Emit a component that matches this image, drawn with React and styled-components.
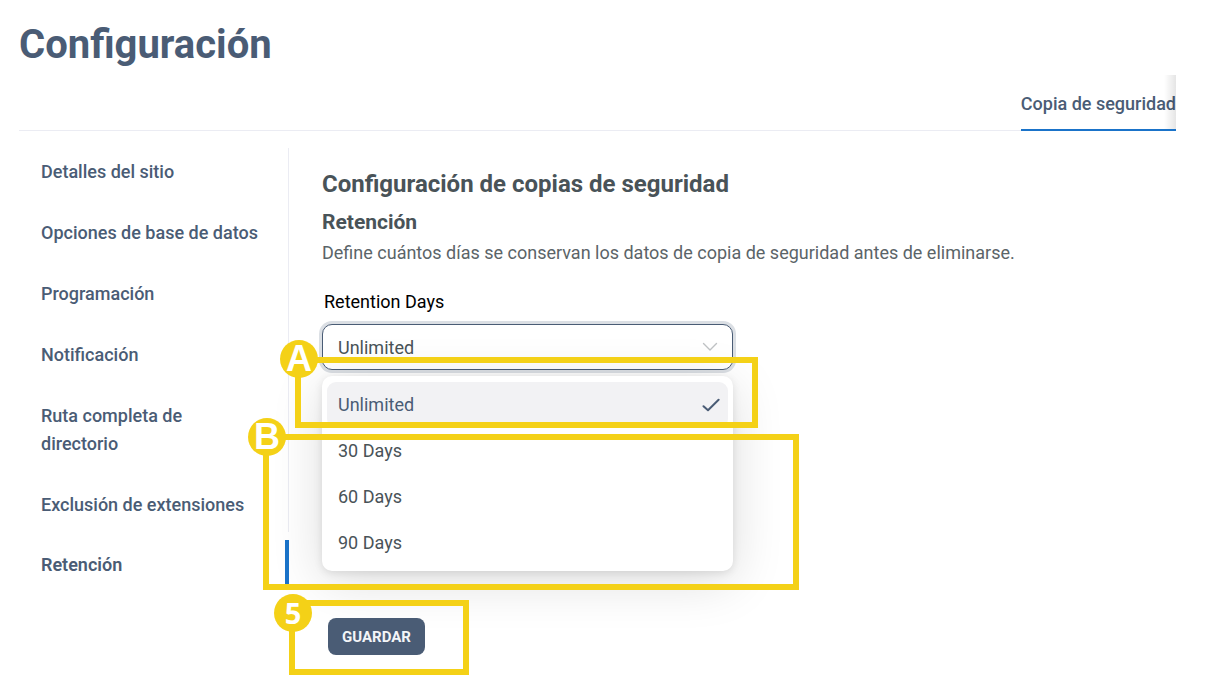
import React from "react";
import styled, { createGlobalStyle } from "styled-components";

const slate = "#4a5c75";
const ink = "#495358";
const line = "#ebecf3";
const blue = "#1a73c9";
const yellow = "#f4d117";

const GlobalStyle = createGlobalStyle`
  *, *::before, *::after { box-sizing: border-box; }
  body {
    margin: 0;
    background: #fff;
    color: ${ink};
    font-family: Roboto, "Liberation Sans", sans-serif;
    font-size: 18px;
    line-height: 28px;
  }
`;

const Page = styled.div`
  display: flex;
  flex-direction: column;
  padding: 20px 49px 0 19px;
`;

const PageTitle = styled.h1`
  margin: 0;
  color: ${slate};
  font-size: 40px;
  font-weight: 700;
  line-height: 50px;
`;

const TabBar = styled.nav`
  position: relative;
  display: flex;
  justify-content: flex-end;
  height: 56px;
  margin-top: 5px;
  border-bottom: 1px solid ${line};

  &::after {
    content: "";
    position: absolute;
    top: 0;
    right: 0;
    width: 12px;
    height: 54px;
    background: linear-gradient(to right, transparent, rgba(0, 0, 0, 0.1));
  }
`;

const Tab = styled.a`
  height: 56px;
  border-bottom: 2px solid ${blue};
  color: ${slate};
  font-weight: 500;
  line-height: 58px;
  text-decoration: none;
  white-space: nowrap;
`;

const Columns = styled.div`
  display: flex;
  align-items: flex-start;
`;

const SideNav = styled.nav`
  flex: 0 0 270px;
  padding-top: 17px;
`;

const NavList = styled.ul`
  display: flex;
  flex-direction: column;
  margin: 0;
  padding: 0;
  list-style: none;
`;

const NavItem = styled.li`
  padding: 20px 25px 13px 22px;
  border-right: 1px solid ${line};

  &:first-child {
    padding-top: 10px;
  }

  &[data-active="true"] {
    margin-top: 8px;
    padding: 11px 25px 11px 22px;
    border-right: 4px solid ${blue};
  }
`;

const NavLink = styled.a`
  display: block;
  color: ${slate};
  font-weight: ${(p) => (p.$active ? 600 : 500)};
  text-decoration: none;
`;

const Panel = styled.main`
  display: flex;
  flex: 1;
  flex-direction: column;
  min-width: 0;
  padding: 37px 0 20px 33px;
`;

const PanelTitle = styled.h2`
  margin: 0;
  font-size: 24px;
  font-weight: 700;
  line-height: 32px;
`;

const SectionTitle = styled.h3`
  margin: 8px 0 3px;
  font-size: 21px;
  font-weight: 700;
  line-height: 28px;
`;

const Description = styled.p`
  margin: 0;
  color: #5b6468;
`;

const Field = styled.div`
  display: flex;
  flex-direction: column;
  gap: 8px;
  padding-top: 21px;
`;

const FieldLabel = styled.label`
  padding-left: 2px;
  color: #000;
`;

const Picker = styled.div`
  position: relative;
  display: grid;
  align-items: center;
  max-width: 411px;
`;

const SelectBox = styled.select`
  grid-area: 1 / 1;
  width: 100%;
  height: 46px;
  padding: 1px 15px 0;
  border: 1px solid ${slate};
  border-radius: 10px;
  outline: none;
  appearance: none;
  background: #fff;
  box-shadow: 0 0 0 3px #dbdfe4;
  color: ${ink};
  font: inherit;
`;

const Chevron = styled.svg`
  grid-area: 1 / 1;
  justify-self: end;
  margin-right: 15px;
  pointer-events: none;
`;

const Menu = styled.div`
  position: absolute;
  top: calc(100% + 6px);
  left: 0;
  right: 0;
  display: flex;
  flex-direction: column;
  padding: 6px 5px 5px;
  border-radius: 10px;
  background: #fff;
  box-shadow: 0 10px 52px rgba(0, 0, 0, 0.14), 0 2px 8px rgba(0, 0, 0, 0.1);
`;

const Option = styled.button`
  display: flex;
  align-items: center;
  justify-content: space-between;
  height: 46px;
  padding: 0 8px 0 11px;
  border: 0;
  border-radius: 9px;
  background: ${(p) => (p.$selected ? "#f2f2f4" : "transparent")};
  color: ${(p) => (p.$selected ? slate : ink)};
  font: inherit;
`;

const Actions = styled.div`
  position: relative;
  align-self: flex-start;
  margin: 248px 0 0 6px;
`;

const SaveButton = styled.button`
  display: block;
  width: 97px;
  height: 37px;
  padding: 0;
  border: 0;
  border-radius: 8px;
  background: ${slate};
  color: #f3f5f8;
  font: inherit;
  font-size: 15px;
  font-weight: 700;
`;

const Callout = styled.div`
  position: absolute;
  inset: ${(p) => p.$inset};
  border: 6px solid ${yellow};
  pointer-events: none;
`;

const Badge = styled.span`
  position: absolute;
  top: ${(p) => p.$top}px;
  left: -21px;
  width: 38px;
  height: 38px;
  border-radius: 50%;
  background: ${yellow};
  color: #fff;
  font-family: ${(p) => p.$face};
  font-size: ${(p) => p.$size}px;
  font-weight: 700;
  line-height: 38px;
  text-align: center;
`;

const grotesque = '"Liberation Sans", sans-serif';
const humanist = '"Open Sans", sans-serif';

const sections = [
  "Detalles del sitio",
  "Opciones de base de datos",
  "Programación",
  "Notificación",
  "Ruta completa de directorio",
  "Exclusión de extensiones",
  "Retención",
];

const periods = ["Unlimited", "30 Days", "60 Days", "90 Days"];

export default function App() {
  return (
    <Page>
      <GlobalStyle />
      <PageTitle>Configuración</PageTitle>
      <TabBar>
        <Tab href="#backup">Copia de seguridad</Tab>
      </TabBar>
      <Columns>
        <SideNav>
          <NavList>
            {sections.map((name) => (
              <NavItem key={name} data-active={name === "Retención"}>
                <NavLink href="#section" $active={name === "Retención"}>
                  {name}
                </NavLink>
              </NavItem>
            ))}
          </NavList>
        </SideNav>
        <Panel>
          <PanelTitle>Configuración de copias de seguridad</PanelTitle>
          <SectionTitle>Retención</SectionTitle>
          <Description>
            Define cuántos días se conservan los datos de copia de seguridad antes de eliminarse.
          </Description>
          <Field>
            <FieldLabel htmlFor="retention">Retention Days</FieldLabel>
            <Picker>
              <SelectBox id="retention" defaultValue="Unlimited">
                {periods.map((p) => (
                  <option key={p}>{p}</option>
                ))}
              </SelectBox>
              <Chevron width="16" height="10" viewBox="0 0 16 10" fill="none" stroke="#bfc2c4" strokeWidth="1.4">
                <path d="M1.5 1.5 8 8l6.5-6.5" strokeLinecap="round" strokeLinejoin="round" />
              </Chevron>
              <Menu role="listbox" aria-label="Retention Days">
                {periods.map((p, i) => (
                  <Option key={p} type="button" role="option" aria-selected={i === 0} $selected={i === 0}>
                    {p}
                    {i === 0 && (
                      <svg width="18" height="14" viewBox="0 0 18 14" fill="none" stroke={slate} strokeWidth="2">
                        <path d="M1.5 8.2 6 12.2 16.6 1.8" strokeLinecap="round" strokeLinejoin="round" />
                      </svg>
                    )}
                  </Option>
                ))}
              </Menu>
              <Callout $inset="33px -25px -58px -27px">
                <Badge $top={-23} $face={grotesque} $size={36}>A</Badge>
              </Callout>
              <Callout $inset="110px -66px -220px -59px">
                <Badge $top={-22} $face={grotesque} $size={36}>B</Badge>
              </Callout>
            </Picker>
          </Field>
          <Actions>
            <SaveButton type="button">GUARDAR</SaveButton>
            <Callout $inset="-18px -44px -20px -39px">
              <Badge $top={-12} $face={humanist} $size={29}>5</Badge>
            </Callout>
          </Actions>
        </Panel>
      </Columns>
    </Page>
  );
}
